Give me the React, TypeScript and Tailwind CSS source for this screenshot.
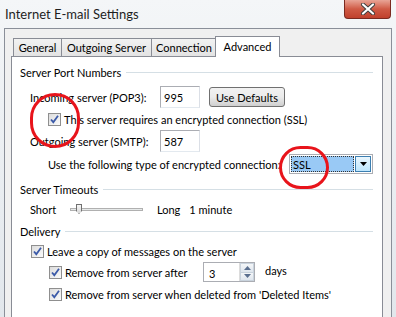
import React from 'react';

function Check() {
  return (
    <span className="w-[13px] h-[13px] shrink-0 border border-[#8f8f8f] bg-gradient-to-br from-[#dcdcdc] to-[#fbfbfb] flex items-center justify-center">
      <svg width="11" height="11" viewBox="0 0 11 11">
        <path d="M2 5.5 L4.3 8.2 L9 1.8" fill="none" stroke="#3b5aa8" strokeWidth="1.8" />
      </svg>
    </span>
  );
}

function Section({ title }: { title: string }) {
  return (
    <div className="flex items-center h-[16px] pl-[8px] pr-[9px]">
      <span>{title}</span>
      <span className="flex-1 h-px bg-[#d5dfe5] ml-[5px] mt-[1px]" />
    </div>
  );
}

function Tab({ label, w, active }: { label: string; w: string; active?: boolean }) {
  if (active) {
    return (
      <div className={`${w} h-[21px] -mb-px -ml-[2px] pt-[4px] text-center bg-white border border-b-0 border-[#898c95] relative z-10`}>
        {label}
      </div>
    );
  }
  return (
    <div className={`${w} h-[18px] pt-[3px] text-center bg-gradient-to-b from-[#f2f2f2] to-[#e3e3e3] border border-b-0 border-[#898c95] -ml-px first:ml-0`}>
      {label}
    </div>
  );
}

export default function App() {
  return (
    <div className="w-[396px] h-[317px] overflow-hidden whitespace-nowrap bg-gradient-to-b from-[#f4f6f8] to-[#e2e7ec] text-[11px] leading-none text-black font-['Lato','Open_Sans',sans-serif] relative">
      {/* title bar */}
      <div className="h-[28px] flex items-start justify-between">
        <span className="pl-[5px] pt-[8px] text-[13px] text-[#1e1e1e]">Internet E-mail Settings</span>
        <div className="mr-[5px] w-[47px] h-[19px] rounded-b-[4px] border border-t-0 border-[#7a2a20] bg-gradient-to-b from-[#e8a496] via-[#cf5a45] to-[#c0402c] flex items-center justify-center">
          <svg width="16" height="12" viewBox="0 0 16 12">
            <path d="M3 1.5 L13 10.5 M13 1.5 L3 10.5" stroke="#3d3d3d" strokeWidth="4" strokeLinecap="round" />
            <path d="M3 1.5 L13 10.5 M13 1.5 L3 10.5" stroke="#ffffff" strokeWidth="2.2" strokeLinecap="round" />
          </svg>
        </div>
      </div>

      {/* client area */}
      <div className="ml-[4px] w-[388px] h-[289px] border border-b-0 border-[#8a8f99] bg-[#f0f0f0] pl-[6px] pt-[7px]">
        <div className="flex items-end h-[20px] pl-[2px]">
          <Tab label="General" w="w-[49px]" />
          <Tab label="Outgoing Server" w="w-[91px]" />
          <Tab label="Connection" w="w-[66px]" />
          <Tab label="Advanced" w="w-[65px]" active />
        </div>
        <div className="w-[372px] h-[270px] bg-white border border-[#898c95] flex flex-col">
          <div className="mt-[7px]">
            <Section title="Server Port Numbers" />
          </div>

          <div className="mt-[6px] h-[22px] flex items-center pl-[18px]">
            <span className="w-[130px]">Incoming server (POP3):</span>
            <div className="w-[40px] h-[22px] border border-[#abadb3] border-b-[#e3e9ef] border-r-[#dbdfe6] flex items-center pl-[3px]">995</div>
            <button className="ml-[9px] w-[76px] h-[20px] rounded-[3px] border border-[#707070] bg-gradient-to-b from-[#f2f2f2] via-[#ebebeb] to-[#cfcfcf] text-[11px] leading-none">Use Defaults</button>
          </div>

          <div className="mt-[2px] h-[18px] flex items-center pl-[36px] gap-[3px]">
            <Check />
            <span>This server requires an encrypted connection (SSL)</span>
          </div>

          <div className="mt-[2px] h-[22px] flex items-center pl-[18px]">
            <span className="w-[130px]">Outgoing server (SMTP):</span>
            <div className="w-[40px] h-[22px] border border-[#abadb3] border-b-[#e3e9ef] border-r-[#dbdfe6] flex items-center pl-[3px]">587</div>
          </div>

          <div className="mt-[1px] h-[22px] flex items-center pl-[36px]">
            <span className="w-[241px]">Use the following type of encrypted connection:</span>
            <div className="w-[84px] h-[20px] border border-[#abadb3] bg-white flex items-center p-[1px]">
              <div className="flex-1 h-full bg-[#99c9f5] border border-dotted border-[#333] flex items-center pl-[1px]">SSL</div>
              <div className="w-[16px] h-[16px] ml-[1px] border border-[#3c7fb1] bg-gradient-to-b from-[#eaf6fd] to-[#bee6fd] flex items-center justify-center">
                <svg width="7" height="4" viewBox="0 0 7 4"><path d="M0 0 H7 L3.5 4 Z" fill="#000" /></svg>
              </div>
            </div>
          </div>

          <div className="mt-[6px]">
            <Section title="Server Timeouts" />
          </div>

          <div className="mt-[3px] h-[18px] flex items-center pl-[18px]">
            <span className="w-[40px]">Short</span>
            <div className="relative w-[73px] h-[18px] flex items-center">
              <div className="w-full h-[3px] border border-[#b0b0b0] bg-[#e7eaea]" />
              <div className="absolute left-[6px] top-[4px] w-[6px] h-[10px] border border-[#707070] bg-gradient-to-b from-[#f6f6f6] to-[#d8d8d8] [clip-path:polygon(0_0,100%_0,100%_70%,50%_100%,0_70%)]" />
            </div>
            <span className="ml-[14px]">Long</span>
            <span className="ml-[9px]">1 minute</span>
          </div>

          <div className="mt-[5px]">
            <Section title="Delivery" />
          </div>

          <div className="mt-[4px] h-[16px] flex items-center pl-[19px] gap-[3px]">
            <Check />
            <span>Leave a copy of messages on the server</span>
          </div>

          <div className="mt-[3px] h-[20px] flex items-center pl-[37px] gap-[3px]">
            <Check />
            <span className="w-[135px]">Remove from server after</span>
            <div className="w-[52px] h-[20px] border border-[#abadb3] flex items-center">
              <span className="flex-1 pl-[5px] mt-[2px]">3</span>
              <div className="w-[15px] h-full flex flex-col border-l border-[#dcdcdc]">
                <div className="flex-1 border border-[#c9d3dd] bg-gradient-to-b from-[#f4f6f8] to-[#dfe6ee] flex items-center justify-center">
                  <svg width="7" height="4" viewBox="0 0 7 4"><path d="M0 4 H7 L3.5 0 Z" fill="#5a6f8f" /></svg>
                </div>
                <div className="flex-1 border border-t-0 border-[#c9d3dd] bg-gradient-to-b from-[#f4f6f8] to-[#dfe6ee] flex items-center justify-center">
                  <svg width="7" height="4" viewBox="0 0 7 4"><path d="M0 0 H7 L3.5 4 Z" fill="#5a6f8f" /></svg>
                </div>
              </div>
            </div>
            <span className="ml-[7px] -mt-[3px]">days</span>
          </div>

          <div className="mt-[4px] h-[16px] flex items-center pl-[37px] gap-[3px]">
            <Check />
            <span>Remove from server when deleted from 'Deleted Items'</span>
          </div>
        </div>
      </div>

      {/* red annotation circles */}
      <div className="absolute left-[30px] top-[93px] w-[50px] h-[55px] rounded-full border-[3px] border-[#e8141b]" />
      <div className="absolute left-[279px] top-[146px] w-[50px] h-[43px] rounded-full border-[3px] border-[#e8141b]" />
    </div>
  );
}
